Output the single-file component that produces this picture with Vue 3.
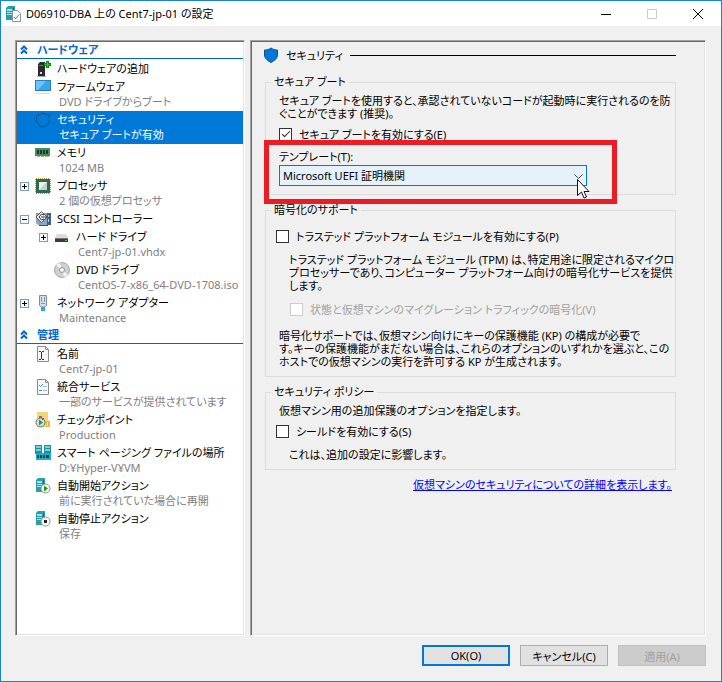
<template>
  <div class="window">
    <!-- Icon sprite -->
    <svg class="sprite" aria-hidden="true">
      <symbol id="icon-hardware" viewBox="0 0 16 16">
        <path d="M3 3l2-2h5v14H3z" fill="#2b2b2b" />
        <path d="M4 4h4v1H4z" fill="#777" />
        <path d="M5 11h2v2H5z" fill="#ddd" />
        <path d="M2 15h9v1H2z" fill="#aaa" />
        <path d="M11 0h3v2h2v3h-2v2h-3V5H9V2h2z" fill="#0a8a0a" />
        <path d="M12 1h1v2h2v1h-2v2h-1V4h-2V3h2z" fill="#1fd01f" />
      </symbol>
      <symbol id="icon-firmware" viewBox="0 0 16 16">
        <path d="M0 1h16v11H0z" fill="#2b7cb8" />
        <path d="M1 2h14v9H1z" fill="#35a7f2" />
        <path d="M1 2h10L3 11H1z" fill="#6cc4fa" />
        <path d="M1 14h14v1H1z" fill="#d5dde2" />
      </symbol>
      <symbol id="icon-shield" viewBox="0 0 16 16">
        <path d="M8 1C6 2.5 3.5 3 1.5 3v5c0 3.500 3.500 6 6.500 7.500C11 14 14.500 11.500 14.500 8V3C12.500 3 10 2.500 8 1z" fill="#0078d7" stroke="#1c4f82" />
      </symbol>
      <symbol id="icon-memory" viewBox="0 0 16 16">
        <path d="M0 3h15v8H0z" fill="#3f8f63" />
        <path d="M2 5h2v4H2zM5 5h2v4H5zM8 5h2v4H8zM11 5h2v4h-2z" fill="#1d3b2c" />
        <path d="M2 11h3v1H2zM6 11h3v1H6zM10 11h4v1h-4z" fill="#c9a877" />
      </symbol>
      <symbol id="icon-cpu" viewBox="0 0 16 16">
        <path d="M1 .5h14M1 15.5h14M.5 1v14M15.5 1v14" stroke="#b59a4c" stroke-dasharray="1 1" />
        <path d="M1 1h14v14H1z" fill="#2e6b4a" />
        <path d="M4 4h8v8H4z" fill="#c9cfcc" />
        <path d="M4 4h8l-8 8z" fill="#eef1ef" />
      </symbol>
      <symbol id="icon-scsi" viewBox="0 0 16 16">
        <path d="M1 2h15v12H3L1 12z" fill="#8ba5c0" />
        <path d="M12 2h4v12h-4z" fill="#3c5f8a" />
        <path d="M13 4h1v2h-1zM13 8h1v3h-1z" fill="#b9cfe5" />
        <path d="M6.5.5L12 6l-5.500 5.500L1 6z" fill="#f4f4f4" stroke="#555" />
        <path d="M9 4L6.500 3 4 6l2.500 3L9 8M6 6h5" fill="none" stroke="#333" />
        <path d="M4 14h9v1H4z" fill="#40546b" />
      </symbol>
      <symbol id="icon-disk" viewBox="0 0 16 16">
        <path d="M3 5h9l2 4H1z" fill="#dcdcdc" />
        <path d="M1 9h13v4H1z" fill="#3a3a3a" />
        <path d="M1 9h13v1H1z" fill="#777" />
        <path d="M11 11h2v1h-2z" fill="#27e04b" />
      </symbol>
      <symbol id="icon-dvd" viewBox="0 0 16 16">
        <circle cx="8" cy="8" r="7.5" fill="#cfcfcf" stroke="#aaa" />
        <path d="M8 8L2 3a8 8 0 0 1 4-2zM8 8l6 5a8 8 0 0 1-4 2z" fill="#f3f3f3" />
        <circle cx="8" cy="8" r="2.5" fill="#eee" stroke="#999" />
        <circle cx="8" cy="8" r="1" fill="#fff" />
      </symbol>
      <symbol id="icon-network" viewBox="0 0 16 16">
        <path d="M4.5.5h7v10l-2 1.500h-3l-2-1.500z" fill="#d5dee6" stroke="#7d8d9b" />
        <path d="M6.5 2v5M9.5 2v5M6 8.500h4" stroke="#8798a7" />
        <path d="M6 12h4v4H6z" fill="#2fa5dc" />
      </symbol>
      <symbol id="icon-name" viewBox="0 0 16 16">
        <path d="M2.5.5h8l3 3v12h-11z" fill="#f7f7f7" stroke="#8a8a8a" />
        <path d="M10.5.5v3h3" fill="none" stroke="#8a8a8a" />
        <path d="M4 5.500h2M7 5.500h2M6.500 6v7M4 13.500h2M7 13.500h2" stroke="#333" />
      </symbol>
      <symbol id="icon-service" viewBox="0 0 16 16">
        <path d="M2.5.5h8l3 3v12h-11z" fill="#f7f7f7" stroke="#8a8a8a" />
        <path d="M10.5.5v3h3" fill="none" stroke="#8a8a8a" />
        <path d="M4 6l1.500 1.500L8 5M4 11.500h3" fill="none" stroke="#2d8fd8" />
        <path d="M8 7.500h4M8 11.500h4" stroke="#aab8c4" />
      </symbol>
      <symbol id="icon-checkpoint" viewBox="0 0 16 16">
        <path d="M2 0h11v15H2z" fill="#f5d674" />
        <path d="M11 9h4v6h-4z" fill="#e5b93c" />
        <path d="M12 10h1v4h-1z" fill="#fbeeb8" />
        <path d="M4 4h3v2H4z" fill="#777" />
        <circle cx="5.5" cy="10.5" r="4.5" fill="#d9dcde" stroke="#707070" />
        <path d="M4 7.500l4 3-4 3z" fill="#18a33a" />
        <path d="M7 8l2-2" stroke="#c22" />
      </symbol>
      <symbol id="icon-paging" viewBox="0 0 16 16">
        <path d="M0 0h7v9H0zM9 0h7v9H9z" fill="#1f8e9e" />
        <path d="M1 1h5v2H1zM10 1h5v2h-5zM1 4h5v2H1zM10 4h5v2h-5z" fill="#6ed6de" />
        <path d="M1 8h15v7H1z" fill="#12b3c8" />
        <path d="M2 10h2v3H2zM5 10h2v3H5zM8 10h2v3H8zM11 10h3v3h-3z" fill="#053a44" />
      </symbol>
      <symbol id="icon-server" viewBox="0 0 16 16">
        <path d="M1 2l2-2h7v14H1z" fill="#2a9dab" />
        <path d="M2 3h5v2H2zM2 6h5v1H2zM2 8h5v1H2z" fill="#9de5ea" />
        <path d="M8 2h1v10H8z" fill="#137480" />
      </symbol>
      <symbol id="icon-start" viewBox="0 0 16 16">
        <use href="#icon-server" width="16" height="16" />
        <circle cx="10.5" cy="10.5" r="4.5" fill="#fff" stroke="#8c8c8c" />
        <path d="M9 7.500l4 3-4 3z" fill="#12a012" />
      </symbol>
      <symbol id="icon-stop" viewBox="0 0 16 16">
        <use href="#icon-server" width="16" height="16" />
        <circle cx="10.5" cy="10.5" r="4.5" fill="#fff" stroke="#8c8c8c" />
        <path d="M9 9h3v3H9z" fill="#222" />
      </symbol>
      <symbol id="icon-app" viewBox="0 0 16 16">
        <use href="#icon-server" width="16" height="16" />
        <path d="M7.5 4.500h5l3 3v8h-8z" fill="#fff" stroke="#8a9299" />
        <path d="M9 11l1.500 2L14 8.500" fill="none" stroke="#2d8fd8" />
      </symbol>
    </svg>

    <!-- Title bar -->
    <header class="titlebar">
      <svg class="icon"><use href="#icon-app" /></svg>
      <h1 class="caption">D06910-DBA 上の Cent7-jp-01 の設定</h1>
      <button class="control" aria-label="最小化">
        <svg width="10" height="10"><path d="M0 5.500h10" stroke="#000" /></svg>
      </button>
      <button class="control" aria-label="最大化" disabled>
        <svg width="10" height="10"><path d="M.5.5h9v9h-9z" fill="none" stroke="#ccc" /></svg>
      </button>
      <button class="control" aria-label="閉じる">
        <svg width="10" height="10"><path d="M0 0l10 10M10 0L0 10" stroke="#000" /></svg>
      </button>
    </header>

    <main class="content">
      <!-- Settings tree -->
      <nav class="panel tree">
        <section v-for="group in groups" :key="group.title">
          <h2 class="group-title">
            <svg width="8" height="10"><path d="M1 4.500l3-3 3 3M1 8.500l3-3 3 3" fill="none" stroke="#06c" stroke-width="2" /></svg>
            {{ group.title }}
          </h2>
          <ul>
            <li
              v-for="item in group.items"
              :key="item.title"
              class="item"
              :class="{ child: item.child, selected: item.title === selected }"
              @click="selected = item.title"
            >
              <span class="toggle">
                <button v-if="item.toggle" class="expander" :aria-label="item.title">
                  <svg width="9" height="9">
                    <path d="M2 4.500h5" stroke="#000" />
                    <path v-if="item.toggle === 'plus'" d="M4.500 2v5" stroke="#000" />
                  </svg>
                </button>
              </span>
              <svg class="icon"><use :href="'#icon-' + item.icon" /></svg>
              <div class="item-text">
                <div class="item-title">{{ item.title }}</div>
                <div v-if="item.detail" class="item-detail">{{ item.detail }}</div>
              </div>
            </li>
          </ul>
        </section>
      </nav>

      <!-- Security page -->
      <div class="panel page">
        <h2 class="page-title">
          <svg class="icon"><use href="#icon-shield" /></svg>
          <span>セキュリティ</span>
        </h2>

        <fieldset>
          <legend>セキュア ブート</legend>
          <p class="inset">セキュア ブートを使用すると、承認されていないコードが起動時に実行されるのを防<br />ぐことができます (推奨)。</p>
          <label class="check inset"><input v-model="secureBoot" type="checkbox" />セキュア ブートを有効にする(E)</label>
          <div class="template inset">
            <label for="template">テンプレート(T):</label>
            <div class="combo">
              <select id="template" v-model="template">
                <option>Microsoft UEFI 証明機関</option>
                <option>Microsoft Windows</option>
              </select>
              <svg class="arrow" width="9" height="6"><path d="M.5.5l4 4 4-4" fill="none" stroke="#444" /></svg>
              <div class="highlight"></div>
              <svg class="pointer" width="13" height="20">
                <path d="M.5.5v16l4-3.500 2.500 6 2.500-1-2.500-5.500h5z" fill="#fff" stroke="#112" />
              </svg>
            </div>
          </div>
        </fieldset>

        <fieldset>
          <legend>暗号化のサポート</legend>
          <label class="check"><input v-model="tpm" type="checkbox" />トラステッド プラットフォーム モジュールを有効にする(P)</label>
          <p class="deep">トラステッド プラットフォーム モジュール (TPM) は、特定用途に限定されるマイクロ<br />プロセッサーであり、コンピューター プラットフォーム向けの暗号化サービスを提供<br />します。</p>
          <label class="check sub disabled"><input type="checkbox" disabled />状態と仮想マシンのマイグレーション トラフィックの暗号化(V)</label>
          <p class="inset note">暗号化サポートでは、仮想マシン向けにキーの保護機能 (KP) の構成が必要で<br />す。キーの保護機能がまだない場合は、これらのオプションのいずれかを選ぶと、この<br />ホストでの仮想マシンの実行を許可する KP が生成されます。</p>
        </fieldset>

        <fieldset>
          <legend>セキュリティ ポリシー</legend>
          <p class="inset">仮想マシン用の追加保護のオプションを指定します。</p>
          <label class="check"><input v-model="shielding" type="checkbox" />シールドを有効にする(S)</label>
          <p class="deep">これは、追加の設定に影響します。</p>
        </fieldset>

        <a class="more" href="#">仮想マシンのセキュリティについての詳細を表示します。</a>
      </div>
    </main>

    <footer class="actions">
      <button class="button primary">OK(O)</button>
      <button class="button">キャンセル(C)</button>
      <button class="button" disabled>適用(A)</button>
    </footer>
  </div>
</template>

<script setup>
import { ref } from 'vue';

const selected = ref('セキュリティ');
const secureBoot = ref(true);
const template = ref('Microsoft UEFI 証明機関');
const tpm = ref(false);
const shielding = ref(false);

const groups = [
  {
    title: 'ハードウェア',
    items: [
      { icon: 'hardware', title: 'ハードウェアの追加' },
      { icon: 'firmware', title: 'ファームウェア', detail: 'DVD ドライブからブート' },
      { icon: 'shield', title: 'セキュリティ', detail: 'セキュア ブートが有効' },
      { icon: 'memory', title: 'メモリ', detail: '1024 MB' },
      { icon: 'cpu', title: 'プロセッサ', detail: '2 個の仮想プロセッサ', toggle: 'plus' },
      { icon: 'scsi', title: 'SCSI コントローラー', toggle: 'minus' },
      { icon: 'disk', title: 'ハード ドライブ', detail: 'Cent7-jp-01.vhdx', toggle: 'plus', child: true },
      { icon: 'dvd', title: 'DVD ドライブ', detail: 'CentOS-7-x86_64-DVD-1708.iso', child: true },
      { icon: 'network', title: 'ネットワーク アダプター', detail: 'Maintenance', toggle: 'plus' },
    ],
  },
  {
    title: '管理',
    items: [
      { icon: 'name', title: '名前', detail: 'Cent7-jp-01' },
      { icon: 'service', title: '統合サービス', detail: '一部のサービスが提供されています' },
      { icon: 'checkpoint', title: 'チェックポイント', detail: 'Production' },
      { icon: 'paging', title: 'スマート ページング ファイルの場所', detail: 'D:¥Hyper-V¥VM' },
      { icon: 'start', title: '自動開始アクション', detail: '前に実行されていた場合に再開' },
      { icon: 'stop', title: '自動停止アクション', detail: '保存' },
    ],
  },
];
</script>

<style>
body {
  margin: 0;
}
</style>

<style scoped>
.window {
  box-sizing: border-box;
  display: flex;
  flex-direction: column;
  min-height: 100vh;
  border: 1px solid #1883d7;
  background: #f0f0f0;
  color: #000;
  font-family: "Noto Sans", "Noto Sans CJK JP", sans-serif;
  font-size: 11px;
  font-kerning: normal;
  font-feature-settings: "palt";
}

.sprite {
  position: absolute;
  width: 0;
  height: 0;
}

.icon {
  flex: none;
  width: 16px;
  height: 16px;
}

h1,
h2,
p,
ul {
  margin: 0;
  padding: 0;
  font-size: 11px;
  font-weight: normal;
}

button,
select {
  font: inherit;
  font-feature-settings: inherit;
  color: inherit;
}

/* Title bar */
.titlebar {
  display: flex;
  align-items: center;
  height: 25px;
  padding-left: 4px;
  background: #fff;
}

.caption {
  flex: 1;
  margin-left: 5px;
  line-height: 16px;
  white-space: nowrap;
}

.control {
  display: flex;
  align-items: center;
  justify-content: center;
  width: 46px;
  height: 25px;
  padding: 0;
  border: none;
  background: none;
}

/* Panels */
.content {
  flex: 1;
  display: grid;
  grid-template-columns: 230px minmax(0, 1fr);
  gap: 5px;
  padding: 14px 15px 0 14px;
}

.panel {
  border: 1px solid;
  border-color: #a0a0a0 #fff #fff #a0a0a0;
  box-shadow: inset 1px 1px #696969, inset -1px -1px #e3e3e3;
}

/* Tree */
.tree {
  padding: 1px;
  background: #fff;
}

.group-title {
  display: flex;
  align-items: center;
  gap: 9px;
  margin-bottom: 1px;
  padding-left: 3px;
  border-bottom: 1px solid #06c;
  color: #06c;
  font-weight: bold;
  line-height: 16px;
}

.item {
  display: flex;
  padding: 1px 0 1px 3px;
  line-height: 16px;
  white-space: nowrap;
}

.child {
  padding-left: 22px;
}

.selected {
  background: #0078d7;
  color: #fff;
}

.toggle {
  flex: none;
  display: flex;
  align-items: center;
  width: 15px;
  height: 16px;
}

.expander {
  display: flex;
  width: 9px;
  height: 9px;
  padding: 0;
  border: none;
  outline: 1px solid #7a9cc0;
  outline-offset: -1px;
  background: #fff;
}

.item-text {
  margin-left: 6px;
}

.item-detail {
  padding: 0 0 1px 2px;
  color: #808080;
  line-height: 14px;
}

.selected .item-detail {
  color: #fff;
}

/* Page */
.page {
  padding: 5px 29px 5px 14px;
}

.page-title {
  display: flex;
  align-items: center;
  gap: 7px;
  height: 18px;
  margin-bottom: 11px;
}

.page-title .icon {
  margin-left: -2px;
}

.page-title::after {
  content: "";
  flex: 1;
  height: 1px;
  background: #000;
}

fieldset {
  min-width: 0;
  margin: 0 0 8px;
  padding: 5px 10px 8px;
  border: 1px solid #dcdcdc;
  line-height: 13px;
  white-space: nowrap;
}

legend {
  margin-left: -5px;
  padding: 0 3px;
  line-height: 14px;
}

.inset {
  margin-left: 3px;
}

.deep {
  margin: 10px 0 0 13px;
}

.check {
  display: flex;
  align-items: center;
  gap: 7px;
  height: 14px;
  margin-top: 7px;
}

.sub {
  margin: 10px 0 0 14px;
}

.disabled {
  color: #a0a0a0;
}

.note {
  margin-top: 13px;
}

.check input {
  appearance: none;
  display: grid;
  place-items: center;
  width: 13px;
  height: 13px;
  margin: 0;
  border: 1px solid #333;
  background: #fff;
}

.check input:checked::before {
  content: "";
  width: 7px;
  height: 3px;
  margin-bottom: 3px;
  border-left: 1px solid #222;
  border-bottom: 1px solid #222;
  transform: rotate(-45deg);
}

.check input:disabled {
  border-color: #ccc;
}

.template {
  margin-top: 9px;
}

.template label {
  display: block;
  line-height: 14px;
}

.combo {
  position: relative;
  width: 80%;
  max-width: 308px;
  margin-top: 1px;
}

.combo select {
  display: block;
  appearance: none;
  width: 100%;
  height: 21px;
  padding: 0 3px;
  border: 1px solid #0078d7;
  border-radius: 0;
  background: #e5f1fb;
}

.arrow {
  position: absolute;
  top: 9px;
  right: 4px;
}

.highlight {
  position: absolute;
  inset: -25px -30px -18px -15px;
  border: 5px solid #ed1c24;
  pointer-events: none;
}

.pointer {
  position: absolute;
  top: 14px;
  right: -3px;
  pointer-events: none;
}

.more {
  display: block;
  margin-right: 4px;
  color: #00f;
  line-height: 14px;
  text-align: right;
  white-space: nowrap;
}

/* Footer */
.actions {
  display: flex;
  justify-content: flex-end;
  gap: 10px;
  padding: 9px 15px 15px;
}

.button {
  width: 88px;
  height: 21px;
  padding: 0;
  border: 1px solid #adadad;
  background: #e1e1e1;
}

.primary {
  border: 2px solid #0078d7;
}

.button:disabled {
  border-color: #bfbfbf;
  background: #ccc;
  color: #a0a0a0;
}
</style>
